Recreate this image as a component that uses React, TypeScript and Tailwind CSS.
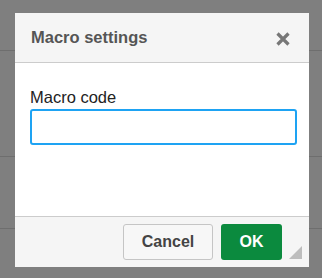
import React, { useState } from 'react';

const App = () => {
  const [code, setCode] = useState('');

  return (
    <div
      className="relative w-[322px] h-[278px] overflow-hidden bg-[#7f7f7f]"
      style={{ fontFamily: '"Liberation Sans", Arial, sans-serif' }}
    >
      {/* dimmed page behind the dialog */}
      <div className="h-[51px] border-b border-[#6e6e6e]" />
      <div className="h-[106px] border-b border-[#6e6e6e]" />
      <div className="h-[72px] border-b border-[#6e6e6e]" />

      <div className="absolute left-[15px] top-[13px] w-[294px] h-[254px] flex flex-col bg-white">
        <div className="h-[50px] flex items-center justify-between pl-4 pr-[19px] bg-[#f5f5f5] border-b border-[#cccccc]">
          <span className="text-[16.5px] font-bold text-[#555555]">Macro settings</span>
          <button className="w-[15px] h-[15px] mt-[3px] flex items-center justify-center">
            <svg width="14" height="14" viewBox="0 0 14 14">
              <path d="M1.5 1.5 L12.5 12.5 M12.5 1.5 L1.5 12.5" stroke="#777777" strokeWidth="3.2" />
            </svg>
          </button>
        </div>

        <div className="flex-1 pt-[25px] pl-[15px]">
          <label htmlFor="macro" className="block text-[16.5px] leading-[19px] text-[#222222]">
            Macro code
          </label>
          <input
            id="macro"
            type="text"
            value={code}
            onChange={(e) => setCode(e.target.value)}
            className="mt-[2px] w-[267px] h-[36px] px-2 border-2 border-[#1ea3f3] rounded-[3px] outline-none text-[16px]"
          />
        </div>

        <div className="relative h-[51px] flex justify-end gap-2 pt-[7px] pr-[27px] bg-[#f5f5f5] border-t border-[#cccccc]">
          <button className="w-[90px] h-[36px] rounded-[3px] border border-[#c5c5c5] bg-[#f7f7f7] text-[16px] font-bold text-[#444444]">
            Cancel
          </button>
          <button className="w-[61px] h-[36px] rounded-[3px] bg-[#0b8a3e] text-[16px] font-bold text-white">
            OK
          </button>
          <svg className="absolute right-[7px] bottom-[8px]" width="13" height="13" viewBox="0 0 13 13">
            <path d="M13 0 L13 13 L0 13 Z" fill="#bdbdbd" />
          </svg>
        </div>
      </div>
    </div>
  );
};

export default App;
